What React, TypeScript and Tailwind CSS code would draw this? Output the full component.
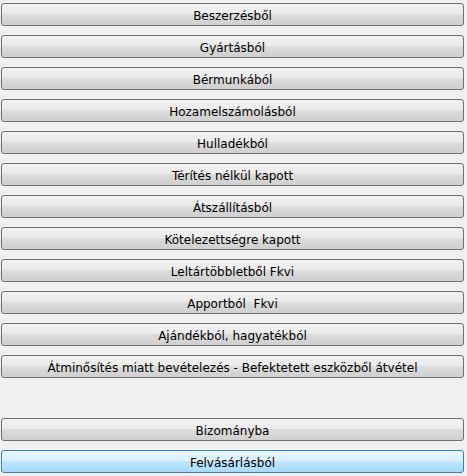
const items = [
  'Beszerzésből',
  'Gyártásból',
  'Bérmunkából',
  'Hozamelszámolásból',
  'Hulladékból',
  'Térítés nélkül kapott',
  'Átszállításból',
  'Kötelezettségre kapott',
  'Leltártöbbletből Fkvi',
  'Apportból  Fkvi',
  'Ajándékból, hagyatékból',
  'Átminősítés miatt bevételezés - Befektetett eszközből átvétel',
]

function Btn({ label, active = false }: { label: string; active?: boolean }) {
  return (
    <button
      type="button"
      className={
        active
          ? 'h-[23px] w-full pt-[2px] rounded-[3px] border border-[#3c7fb1] bg-[linear-gradient(to_bottom,#eaf6fd_0%,#d9f0fc_45%,#bee6fd_50%,#a7d9f5_100%)] text-[12px] text-black whitespace-pre leading-none'
          : 'h-[23px] w-full pt-[2px] rounded-[3px] border border-[#707070] bg-[linear-gradient(to_bottom,#f2f2f2_0%,#ebebeb_45%,#dddddd_50%,#cfcfcf_100%)] text-[12px] text-black whitespace-pre leading-none'
      }
      style={{ fontFamily: '"DejaVu Sans", Verdana, sans-serif' }}
    >
      {label}
    </button>
  )
}

export default function App() {
  return (
    <div className="w-[467px] h-[476px] bg-[#f0f0f0] pt-[3px] pl-[1px] pr-[3px] flex flex-col gap-[9px]">
      {items.map((label) => (
        <Btn key={label} label={label} />
      ))}
      <div className="h-[22px]" />
      <Btn label="Bizományba" />
      <Btn label="Felvásárlásból" active />
    </div>
  )
}
